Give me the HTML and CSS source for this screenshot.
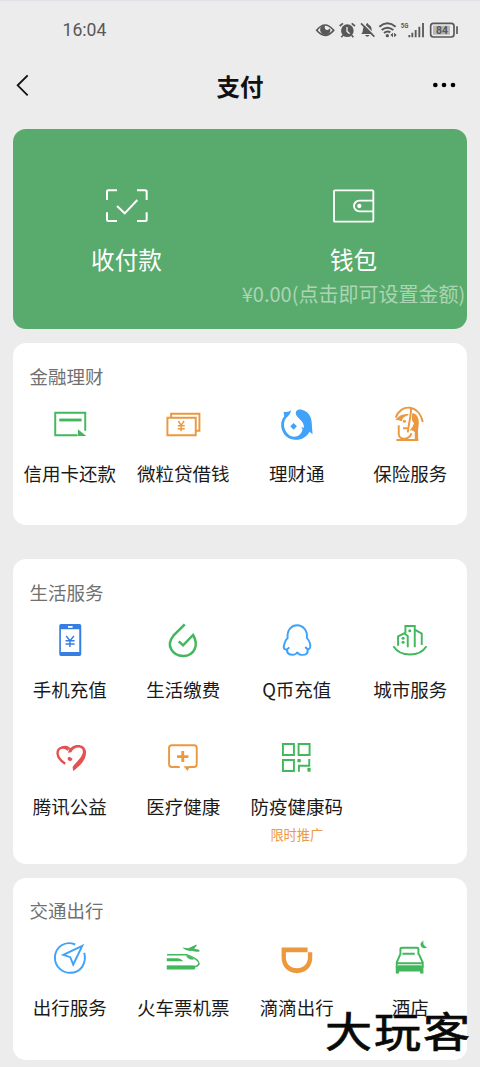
FILE: index.html
```html
<!DOCTYPE html>
<html lang="zh-CN">
<head>
<meta charset="utf-8">
<title>支付</title>
<link rel="stylesheet" href="styles.css">
</head>
<body>
<div class="screen">
  <div class="status">
    <span class="time">16:04</span>
    <svg class="status-icons" viewBox="45 60 435 54" fill="none" stroke="#585858">
      <path d="M50 88Q75 56 101 88Q75 118 50 88Z" stroke-width="5"/>
      <path d="M68 74A15 15 0 1 0 90 82Q84 90 78 86Q71 81 76 73Z" fill="#585858" stroke="none"/>
      <circle cx="142" cy="89" r="19" fill="#585858" stroke="none"/>
      <path d="M119 75L129 67M155 67L165 75M129 103L124 109M155 103L160 109" stroke-width="5"/>
      <path d="M141 78V91L149 98" stroke="#ececec" stroke-width="4"/>
      <path d="M184 99Q189 94 189 84Q190 74 198 71Q202 61 206 71Q215 75 215 86Q215 95 220 99ZM195 102H209Q202 113 195 102Z" fill="#585858" stroke="none"/>
      <path d="M188 65L227 105" stroke="#ececec" stroke-width="4"/>
      <path d="M183 67L223 107" stroke-width="5"/>
      <path d="M238 77Q262 57 287 77M245 87Q262 73 280 87M252 96Q262 88 271 94" stroke-width="6"/>
      <circle cx="262" cy="104" r="5" fill="#585858" stroke="none"/>
      <path d="M279 95V109L271 102ZM282 95V109L290 102Z" fill="#585858" stroke="none"/>
      <text class="net" x="302" y="82" textLength="23" lengthAdjust="spacingAndGlyphs">5G</text>
      <path d="M328 102V109M337 95V109M347 87V109M358 77V109M369 66V109" stroke-width="5.5"/>
      <rect x="392" y="67" width="70" height="41" rx="8" stroke-width="5"/>
      <rect x="399" y="74" width="51" height="27" fill="#b7b7b7" stroke="none"/>
      <path d="M471 76V99" stroke-width="5"/>
      <text class="battery" x="426" y="99">84</text>
    </svg>
  </div>
  <div class="nav">
    <svg class="back" viewBox="48 219 42 72" fill="none" stroke="#111" stroke-width="5.5"><path d="M83 226L53 256L83 286"/></svg>
    <h1 class="title">支付</h1>
    <svg class="more" viewBox="396 243 72 24"><circle cx="406" cy="255" r="7"/><circle cx="432" cy="255" r="7"/><circle cx="459" cy="255" r="7"/></svg>
  </div>

  <div class="hero">
    <div class="hero-item">
      <svg class="hero-icon" viewBox="309 198 144 120" fill="none" stroke="#fff" stroke-width="6"><path d="M321 240V215Q321 211 325 211H351M411 211H435Q440 211 440 215V240M440 277V299Q440 303 435 303H411M351 303H325Q321 303 321 299V277M351 258L374 280L412 240"/></svg>
      <span class="hero-label">收付款</span>
    </div>
    <div class="hero-item">
      <svg class="hero-icon" viewBox="270 198 144 120" fill="none" stroke="#fff" stroke-width="5.5"><rect x="282" y="211" width="118" height="94" rx="3"/><path d="M400 242H358A16 16 0 0 0 358 274H400"/><circle cx="358" cy="258" r="6.5" fill="#fff" stroke="none"/></svg>
      <span class="hero-label">钱包</span>
      <span class="amount">¥0.00(点击即可设置金额)</span>
    </div>
  </div>

  <section class="card finance">
    <h2 class="heading">金融理财</h2>
    <div class="grid">
      <div class="item"><svg class="icon green" viewBox="149.25 195 120 120"><path d="M232 286H165V218H255V272" class="line"/><path d="M177 240H244" class="line plus"/><path d="M233 268L258 288H233Z"/></svg><span class="label">信用卡还款</span></div>
      <div class="item"><svg class="icon orange" viewBox="489.75 195 120 120"><path d="M503 233H588V286H503ZM514 231V221H599V272H590" class="line"/><path d="M536 243L544 256L553 243M544 256V274M534 257H555M534 266H555" class="line thin"/></svg><span class="label">微粒贷借钱</span></div>
      <div class="item"><svg class="icon sky" viewBox="110.25 195 120 120"><path d="M130 215Q144 219 153 210Q150 223 143 229C124 244 129 276 151 288C169 295 184 285 187 268L183 262L191 263C193 242 170 236 167 222C165 211 175 206 187 210C208 216 215 235 215 258L217 283L208 275C199 292 180 301 164 299C137 298 120 274 123 248Q125 237 132 229Z"/><path d="M160 249L170 259L160 269L150 259Z"/></svg><span class="label">理财通</span></div>
      <div class="item"><svg class="icon orange" viewBox="450.75 195 120 120"><path d="M468 233C482 191 537 191 549 246" class="line"/><path d="M514 205C514 228 507 250 504 277" class="line"/><path d="M467 239Q480 221 506 221V226Q489 229 486 244Q477 240 467 239ZM518 219C540 223 539 248 535 269V300H525V276Q517 269 509 272Q520 262 523 249Q513 244 518 219Z"/><path d="M477 256V284Q480 298 497 296Q512 293 515 280M490 265H504M470 300H536" class="line"/><circle cx="494" cy="244" r="4.5"/></svg><span class="label">保险服务</span></div>
    </div>
  </section>

  <section class="card life">
    <h2 class="heading">生活服务</h2>
    <div class="grid">
      <div class="item"><svg class="icon blue" viewBox="149.25 183 120 120"><path fill-rule="evenodd" d="M182 192H238Q243 192 243 197V283Q243 288 238 288H182Q177 288 177 283V197Q177 192 182 192ZM182 208V276H237V208ZM203 198V203H217V198Z"/><path d="M198 228L209 242L221 228M209 242V261M196 242H223M196 252H223" class="line thin"/></svg><span class="label">手机充值</span></div>
      <div class="item"><svg class="icon green" viewBox="489.75 183 120 120"><path d="M555 193L521 227C496 258 520 288 550 288C584 288 598 255 580 225L550 256L537 244" class="line bold"/></svg><span class="label">生活缴费</span></div>
      <div class="item"><svg class="icon sky" viewBox="110.25 183 120 120"><path d="M147 262C136 274 127 268 132 253Q135 240 142 234C137 182 205 184 200 234Q211 247 210 260Q207 275 195 261M142 265C136 280 148 286 162 284Q170 282 171 276Q173 283 181 284C197 287 207 279 200 266" class="line"/></svg><span class="label">Q币充值</span></div>
      <div class="item"><svg class="icon green" viewBox="450.75 183 120 120"><path d="M461 259C482 292 540 292 560 259M475 257V229L493 220L504 228V262M497 220V198H525V262M525 209L546 221V255" class="line"/><circle cx="510" cy="212" r="4.5"/><circle cx="490" cy="235" r="4.5"/><circle cx="490" cy="247" r="4.5"/></svg><span class="label">城市服务</span></div>
      <div class="item"><svg class="icon red" viewBox="149.25 39 120 120"><path d="M195 116C182 108 173 99 172 86C171 68 191 62 204 75" class="line heart"/><path d="M203 83C210 54 253 52 257 78C261 104 235 126 219 138L217 127C223 114 247 98 248 80C248 62 220 64 213 82ZM184 64Q207 58 214 77Q198 65 184 68ZM202 98L208 95L217 101L212 109L203 106Z"/></svg><span class="label">腾讯公益</span></div>
      <div class="item"><svg class="icon orange" viewBox="489.75 39 120 120"><path d="M540 126H516Q508 126 508 118V69Q508 61 516 61H583Q591 61 591 69V118Q591 126 583 126H568" class="line"/><path d="M551 124H570L564 138Z"/><path d="M549 78V111M532 95H566" class="line plus"/></svg><span class="label">医疗健康</span></div>
      <div class="item"><svg class="icon green" viewBox="110.25 39 120 120"><path d="M128 57H161V90H128ZM175 57H208V90H175ZM128 105H161V138H128ZM172 107H181M176 140V122H207V102M202 133H210" class="line"/><path d="M172 102H181V112H172ZM202 128H211V140H202Z"/></svg><span class="label">防疫健康码</span><span class="promo">限时推广</span></div>
    </div>
  </section>

  <section class="card travel">
    <h2 class="heading">交通出行</h2>
    <div class="grid">
      <div class="item"><svg class="icon sky" viewBox="149.25 163.5 120 120"><path d="M225 180C193 167 165 188 164 219C164 247 186 265 210 265C241 265 260 237 252 205M246 184L189 211L210 218L219 240Z" class="line"/></svg><span class="label">出行服务</span></div>
      <div class="item"><svg class="icon green" viewBox="489.75 163.5 120 120"><path d="M502 211H562Q596 222 598 238Q594 248 579 246H502" class="line thin"/><path d="M501 221H535Q544 222 551 230H501ZM501 243H584Q590 246 584 255H501ZM558 213Q574 214 585 225H572Q563 222 558 213ZM547 189L566 191L590 180Q593 182 588 187L583 193L599 196V201Q590 203 576 199Q562 202 547 189Z"/></svg><span class="label">火车票机票</span></div>
      <div class="item"><svg class="icon orange" viewBox="110.25 163.5 120 120"><path fill-rule="evenodd" d="M124 189H202V203H216V220C216 248 196 266 170 266C143 266 124 246 124 219ZM137 203V219C137 238 151 251 170 251C189 251 203 238 203 219V203Z"/></svg><span class="label">滴滴出行</span></div>
      <div class="item"><svg class="icon green" viewBox="450.75 163.5 120 120"><path d="M482 211V194Q482 190 487 190H531Q536 190 536 194V211M488 208H525M482 208L471 234V249M537 208L549 234V249M474 236H546" class="line"/><path d="M468 246L477 242H543L551 246V267H541V261H478V267H468ZM551 168Q548 185 562 188Q554 194 546 188Q536 178 551 168Z"/></svg><span class="label">酒店</span></div>
    </div>
  </section>
  <div class="watermark"><span>大</span><span>玩</span><span>客</span></div>
</div>
</body>
</html>
```
FILE: styles.css
```css
* { box-sizing: border-box; }
body {
  margin: 0;
  background: #ececec;
  font-family: "Noto Sans CJK SC", sans-serif;
  color: #1a1a1a;
}
.screen {
  position: relative;
  width: 480px;
  height: 1067px;
  overflow: hidden;
  border-top: 1px solid #e1e1e8;
}
.status {
  height: 59px;
  padding: 0 20px 0 62.5px;
  display: flex;
  align-items: center;
  justify-content: space-between;
}
.time { margin-top: -2px; font: 17.6px/20px "Roboto", sans-serif; color: #585858; }
.status-icons { width: 145px; height: 18px; margin-top: -2px; }
.status-icons text { fill: #585858; stroke: none; font-family: "Roboto", sans-serif; font-weight: 700; }
.net { font-size: 23px; }
.battery { font-size: 31px; text-anchor: middle; }
.nav {
  height: 52px;
  padding: 0 24px 0 16px;
  display: grid;
  grid-template-columns: 60px 1fr 60px;
  align-items: center;
}
.back { width: 14px; height: 24px; margin-top: -2px; }
.title { margin: 0 0 0 8px; text-align: center; font-size: 23.5px; line-height: 34px; font-weight: 700; color: #111; }
.more { width: 24px; height: 8px; justify-self: end; margin-top: -2px; }
.hero {
  height: 200px;
  margin: 17px 13px 14px;
  padding-top: 57px;
  display: grid;
  grid-template-columns: 1fr 1fr;
  border-radius: 13px;
  background: #59ab6d;
}
.hero-item { display: flex; flex-direction: column; align-items: center; color: #fff; min-width: 0; }
.hero-icon { width: 48px; height: 40px; }
.hero-label { margin-top: 15px; font-size: 23.6px; line-height: 36px; }
.amount { margin-top: 3px; font-size: 20px; line-height: 28px; white-space: nowrap; color: #abd5b5; }
.card {
  margin: 0 13px;
  padding-top: 19px;
  border-radius: 13px;
  background: #fff;
}
.finance { height: 182px; margin-bottom: 34px; }
.life { height: 304.5px; margin-bottom: 14px; }
.travel { height: 182.5px; padding-top: 18.5px; }
.heading { margin: 0 0 15px 16.5px; font-size: 18.5px; line-height: 28px; font-weight: 400; color: #707070; }
.grid { display: grid; grid-template-columns: repeat(4, 113.5px); row-gap: 34px; }
.item { height: 83px; display: flex; flex-direction: column; align-items: center; }
.icon { width: 40px; height: 40px; flex: none; fill: currentColor; }
.label { margin-top: 14px; font-size: 18.5px; line-height: 28px; white-space: nowrap; }
.promo { margin-top: 5px; font-size: 13.2px; line-height: 20px; color: #ec9a45; }
.line { fill: none; stroke: currentColor; stroke-width: 5.8; }
.thin { stroke-width: 4.4; }
.bold { stroke-width: 7.5; }
.heart { stroke-width: 7; }
.plus { stroke-width: 8.5; }
.green { color: #42b75c; }
.orange { color: #ec983f; }
.sky { color: #40a2f8; }
.blue { color: #357fe3; }
.red { color: #e35151; }
.watermark {
  position: absolute;
  left: 325px;
  top: 1002px;
  display: flex;
  gap: 2px;
  font-size: 47px;
  line-height: 52px;
  font-weight: 400;
  color: #090909;
  -webkit-text-stroke: 0.8px #090909;
  text-shadow: 0 0 2px #eee9ce, 0 0 1px #eee9ce;
  transform: scaleY(0.88);
}
```
